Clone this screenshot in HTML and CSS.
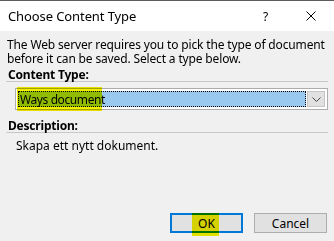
FILE: index.html
```html
<!DOCTYPE html>
<html>
<head>
<meta charset="utf-8">
<link rel="stylesheet" href="styles.css">
</head>
<body>
<div class="dialog">
  <div class="titlebar">
    <span class="title">Choose Content Type</span>
    <span class="help">?</span>
    <span class="close">
      <svg width="10" height="10" viewBox="0 0 10 10"><path d="M0.5 0.5 L9.5 9.5 M9.5 0.5 L0.5 9.5" stroke="#000" stroke-width="1" fill="none"/></svg>
    </span>
  </div>
  <div class="content">
    <p class="intro">The Web server requires you to pick the type of document before it can be saved. Select a type below.</p>
    <div class="section-label">Content Type:</div>
    <div class="combo-row">
      <div class="combo">
        <div class="combo-value"><span class="value-text">Ways document</span></div>
        <div class="combo-btn">
          <svg width="9" height="5" viewBox="0 0 9 5"><path d="M0.5 0.5 L4.5 4.5 L8.5 0.5" stroke="#444" stroke-width="1" fill="none"/></svg>
        </div>
        <span class="marker marker-combo"></span>
      </div>
    </div>
    <div class="section-label desc-label">Description:</div>
    <p class="desc">Skapa ett nytt dokument.</p>
    <div class="buttons">
      <button class="btn btn-default">OK<span class="marker marker-ok"></span></button>
      <button class="btn">Cancel</button>
    </div>
  </div>
</div>
</body>
</html>
```
FILE: styles.css
```css
* { box-sizing: border-box; }
html, body { margin: 0; padding: 0; }
body {
  width: 334px;
  height: 241px;
  background: #f0f0f0;
  font-family: "Noto Sans", "Open Sans", sans-serif;
  font-size: 12px;
  color: #000;
  overflow: hidden;
}
.dialog {
  width: 334px;
  height: 241px;
  border-top: 1px solid #5c5c5c;
  display: flex;
  flex-direction: column;
}
.titlebar {
  height: 30px;
  flex-shrink: 0;
  background: #fff;
  display: flex;
  align-items: center;
  padding-left: 8px;
}
.title {
  flex: 1;
  font-size: 13px;
  letter-spacing: -0.1px;
}
.help {
  flex-shrink: 0;
  width: 12px;
  margin-right: 31px;
  font-size: 12px;
}
.close {
  flex-shrink: 0;
  width: 10px;
  height: 10px;
  margin-right: 18px;
  display: flex;
}
.content {
  flex: 1;
  padding: 0 6px;
  display: flex;
  flex-direction: column;
}
.intro {
  margin: 7px 0 0 1px;
  line-height: 14px;
  letter-spacing: -0.15px;
}
.section-label {
  font-weight: bold;
  margin-top: 2px;
  padding: 0 0 0 2px;
  line-height: 13px;
  border-bottom: 1px solid #c8c8c8;
  letter-spacing: -0.2px;
}
.combo-row {
  padding: 6px 0 0 9px;
}
.combo {
  position: relative;
  height: 22px;
  border: 1px solid #adadad;
  background: #fff;
  display: flex;
  padding: 2px;
}
.combo-value {
  flex: 1;
  background: #99c9ef;
  outline: 1px dotted #000;
  outline-offset: -1px;
  display: flex;
  align-items: center;
  padding-left: 2px;
  margin-right: 1px;
}
.value-text {
  font-size: 12px;
  letter-spacing: -0.4px;
}
.combo-btn {
  width: 18px;
  background: #e1e1e1;
  border: 1px solid #c4c4c4;
  display: flex;
  align-items: center;
  justify-content: center;
}
.marker {
  position: absolute;
  background: #f2ee00;
  mix-blend-mode: multiply;
  pointer-events: none;
}
.marker-combo {
  left: 1px;
  top: -2px;
  width: 85px;
  height: 24px;
}
.desc-label {
  margin-top: 9px;
}
.desc {
  margin: 6px 0 0 10px;
  line-height: 14px;
}
.buttons {
  margin-top: auto;
  margin-bottom: 8px;
  display: flex;
  justify-content: flex-end;
  gap: 11px;
  padding-right: 1px;
}
.btn {
  position: relative;
  width: 73px;
  height: 20px;
  background: #e1e1e1;
  border: 1px solid #adadad;
  font-family: inherit;
  font-size: 12px;
  color: #000;
  padding: 0;
}
.btn-default {
  border: 2px solid #0078d7;
}
.marker-ok {
  left: 20px;
  top: -2px;
  width: 27px;
  height: 23px;
}
```
